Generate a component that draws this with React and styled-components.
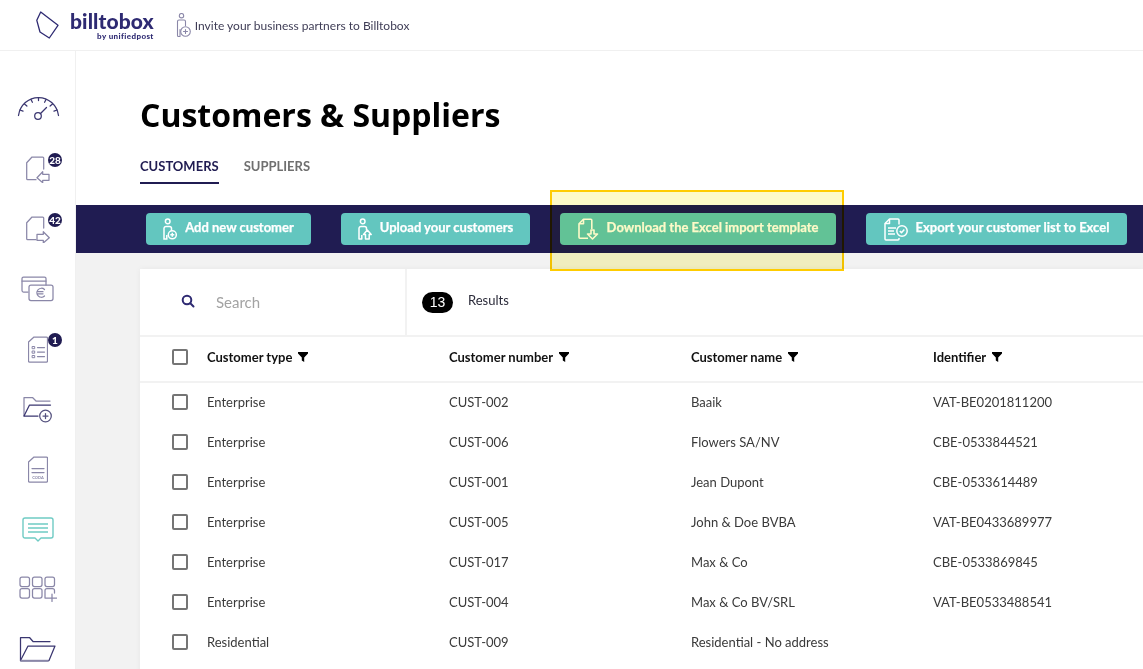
import React from "react";
import styled, { createGlobalStyle } from "styled-components";

const Global = createGlobalStyle`
  html, body { margin: 0; padding: 0; background: #fff; }
  body { font-family: "Lato", "Liberation Sans", sans-serif; color: #2b2b3a; overflow: hidden; }
  * { box-sizing: border-box; }
`;

const Page = styled.div`
  position: relative;
  width: 1143px;
  height: 669px;
  overflow: hidden;
`;

const Header = styled.header`
  height: 51px;
  display: flex;
  align-items: center;
  padding-left: 36px;
  border-bottom: 1px solid #f0f0f0;
`;

const Brand = styled.div`
  display: flex;
  align-items: center;
  gap: 11px;
`;

const BrandText = styled.div`
  display: flex;
  flex-direction: column;
  align-items: flex-end;
  color: #2e2a72;
  font-weight: 900;
  line-height: 1;
`;

const BrandName = styled.span`
  font-size: 21px;
  letter-spacing: 0.1px;
`;

const BrandSub = styled.span`
  font-size: 8px;
  font-weight: 900;
  letter-spacing: 0.4px;
  margin-top: 1px;
`;

const Invite = styled.div`
  display: flex;
  align-items: center;
  gap: 4px;
  margin-left: 22px;
  font-size: 12px;
  color: #3f3d56;
`;

const Body = styled.div`
  display: flex;
  height: 618px;
`;

const Sidebar = styled.nav`
  width: 76px;
  flex: none;
  padding-top: 28px;
  border-right: 1px solid #f0f0f0;
`;

const NavItem = styled.div`
  position: relative;
  height: 60px;
  display: flex;
  align-items: center;
  justify-content: center;
`;

const NavBadge = styled.span`
  position: absolute;
  left: 48px;
  top: ${(p) => p.$top}px;
  width: 14px;
  height: 14px;
  border-radius: 50%;
  background: #201c52;
  color: #fff;
  font-size: 10px;
  font-weight: 900;
  line-height: 14px;
  text-align: center;
`;

const Main = styled.main`
  flex: 1;
  min-width: 0;
  display: flex;
  flex-direction: column;
`;

const TitleArea = styled.div`
  height: 154px;
  padding: 44px 0 0 64px;
`;

const Title = styled.h1`
  margin: 0;
  font-family: "Open Sans", sans-serif;
  font-size: 32px;
  font-weight: 700;
  line-height: 40px;
  color: #000;
`;

const Tabs = styled.div`
  display: flex;
  gap: 25px;
  margin-top: 20px;
`;

const Tab = styled.div`
  font-size: 13px;
  font-weight: 700;
  height: 29px;
  padding-top: 3px;
  color: ${(p) => (p.$active ? "#201c52" : "#6f6f6f")};
  border-bottom: ${(p) => (p.$active ? "2px solid #201c52" : "none")};
`;

const Toolbar = styled.div`
  height: 48px;
  flex: none;
  background: #201c52;
  display: flex;
  align-items: center;
  padding-left: 70px;
  gap: 30px;
`;

const ToolButton = styled.button`
  height: 32px;
  width: ${(p) => p.$w}px;
  flex: none;
  border: 0;
  border-radius: 4px;
  background: #63c6bf;
  color: #fff;
  font-family: inherit;
  font-size: 13px;
  font-weight: 700;
  -webkit-text-stroke: 0.25px #fff;
  display: flex;
  align-items: center;
  justify-content: center;
  gap: 8px;
  padding: 0;
`;

const ButtonLabel = styled.span`
  margin-top: -5px;
`;

const Content = styled.div`
  flex: 1;
  min-height: 0;
  background: #f2f2f2;
  padding: 16px 0 0 64px;
`;

const Card = styled.section`
  background: #fff;
  height: 420px;
  box-shadow: 0 0 6px rgba(0, 0, 0, 0.05);
`;

const SearchRow = styled.div`
  height: 68px;
  display: flex;
  border-bottom: 2px solid #f2f2f2;
`;

const SearchBox = styled.div`
  width: 267px;
  display: flex;
  align-items: center;
  padding-left: 41px;
  gap: 21px;
  border-right: 2px solid #f2f2f2;
  font-size: 15px;
  color: #a3a3a3;

  svg {
    margin-top: -2px;
  }
`;

const Results = styled.div`
  display: flex;
  align-items: center;
  padding-left: 15px;
  gap: 15px;
  font-size: 13px;
  color: #2b2b3a;
`;

const Count = styled.span`
  width: 31px;
  height: 21px;
  border-radius: 11px;
  background: #000;
  color: #fff;
  font-family: "Liberation Sans", sans-serif;
  font-size: 14px;
  line-height: 21px;
  text-align: center;
`;

const ResultsLabel = styled.span`
  margin-top: -4px;
`;

const Row = styled.div`
  display: grid;
  grid-template-columns: 35px repeat(4, 242px);
  align-items: center;
  height: ${(p) => (p.$head ? 46 : 40)}px;
  padding: ${(p) => (p.$head ? "0 0 4px 32px" : "0 0 2px 32px")};
  font-size: 13px;
  color: #3a3a3a;
  border-bottom: ${(p) => (p.$head ? "2px solid #f2f2f2" : "none")};
`;

const Check = styled.span`
  width: 16px;
  height: 16px;
  border: 2px solid #757575;
  border-radius: 2px;
  background: #fff;
`;

const HeadCell = styled.div`
  display: flex;
  align-items: center;
  gap: 6px;
  font-weight: 700;
  color: #111;
`;

const Highlight = styled.div`
  position: absolute;
  left: 550px;
  top: 190px;
  width: 294px;
  height: 81px;
  border: 2px solid #ffcc00;
  background: #fdfac8;
  mix-blend-mode: multiply;
`;

const line = { fill: "none", stroke: "#8a87a8", strokeWidth: 1.25, strokeLinejoin: "round", strokeLinecap: "round" };
const dark = { ...line, stroke: "#3a3670" };

const Gauge = () => (
  <svg width="44" height="26" viewBox="1 0 44 26">
    <path d="M3.500 19.500C5 9 13.500 1.500 23.500 1.500S42 9 43.500 19.500" {...dark} />
    <path d="M5 14l3 1.200M9.500 8l2.400 2M16 3.500l1.400 2.800M23.500 1.600v3M31 3.500l-1.400 2.800M37.500 8l-2.400 2M42 14l-3 1.200" {...dark} />
    <circle cx="23" cy="20" r="3.300" {...dark} />
    <path d="M25.300 17.700L31.500 11.500" {...dark} />
  </svg>
);

const DocIn = () => (
  <svg width="24" height="27" viewBox="0 0 24 27">
    <path d="M17.700 13V2a1 1 0 0 0-1-1H6L.7 6.700V22.700a1 1 0 0 0 1 1H10" {...line} />
    <path d="M11 21.700l5.700-6v2.600H23v6h-6.300v2.400z" {...line} />
  </svg>
);

const DocOut = () => (
  <svg width="24" height="27" viewBox="0 0 24 27">
    <path d="M17.700 12V2a1 1 0 0 0-1-1H6L.7 6.700V22.700a1 1 0 0 0 1 1H10" {...line} />
    <path d="M11 18.300h6.300v-2.600l6 6-6 5.300v-2.700H11z" {...line} />
  </svg>
);

const Cards = () => (
  <svg width="33" height="26" viewBox="1 0 33 26">
    <path d="M8 16H3.500A1.500 1.500 0 0 1 2 14.500v-12A1.500 1.500 0 0 1 3.500 1h21A1.500 1.500 0 0 1 26 2.500V9" {...line} />
    <path d="M2 5h24" {...line} />
    <rect x="9" y="9" width="24" height="15.500" rx="2" {...line} />
    <path d="M24.500 13.500a4.500 4.500 0 1 0 0 6.500M17 15.700h6M17 17.800h6" {...line} />
  </svg>
);

const DocList = () => (
  <svg width="20" height="27" viewBox="0 0 20 27">
    <path d="M6 1h12.500a1 1 0 0 1 1 1v23a1 1 0 0 1-1 1h-17a1 1 0 0 1-1-1V6z" {...line} />
    <rect x="4.500" y="10.500" width="2.200" height="2.200" {...line} strokeWidth="1" />
    <rect x="4.500" y="15" width="2.200" height="2.200" {...line} strokeWidth="1" />
    <rect x="4.500" y="19.500" width="2.200" height="2.200" {...line} strokeWidth="1" />
    <path d="M9.500 11.500h7M9.500 16h7M9.500 20.500h7" {...line} />
  </svg>
);

const FolderPlus = () => (
  <svg width="30" height="27" viewBox="0 0 30 27">
    <path d="M1 20V1.500h8.500l3.500 3.500h14" {...line} />
    <path d="M1 20L6.500 9h21M1 20h14" {...dark} />
    <circle cx="22.500" cy="20" r="5.800" {...line} stroke="#55527f" />
    <path d="M22.500 17.500v5M20 20h5" {...line} stroke="#55527f" />
  </svg>
);

const DocCoda = () => (
  <svg width="20" height="27" viewBox="0 0 20 27">
    <path d="M6 1h12.500a1 1 0 0 1 1 1v23a1 1 0 0 1-1 1h-17a1 1 0 0 1-1-1V6z" {...line} />
    <path d="M4 12.500h12M4 16.500h12" {...line} />
    <text x="10" y="22.500" fontFamily="Lato, sans-serif" fontSize="4" fontWeight="700" fill="#8a87a8" textAnchor="middle">CODA</text>
  </svg>
);

const Chat = () => (
  <svg width="32" height="26" viewBox="0 0 32 26">
    <path d="M3 2h26a2 2 0 0 1 2 2v16a2 2 0 0 1-2 2H19l-3 3-3-3H3a2 2 0 0 1-2-2V4a2 2 0 0 1 2-2z" fill="none" stroke="#6fcbc4" strokeWidth="1.400" strokeLinejoin="round" />
    <path d="M6 8h20M6 12h20M6 16h20" fill="none" stroke="#6fcbc4" strokeWidth="1.400" />
  </svg>
);

const Grid = () => (
  <svg width="38" height="26" viewBox="0 0 38 26">
    {[1, 13.500, 26].map((x) => <rect key={x} x={x} y="1" width="9.500" height="9.500" rx="2" {...line} />)}
    {[1, 13.500].map((x) => <rect key={x} x={x} y="12.500" width="9.500" height="9.500" rx="2" {...line} />)}
    <path d="M26 22V14.500a2 2 0 0 1 2-2h5.500a2 2 0 0 1 2 2V17M26 22h11.500M33 18v7.500" {...line} />
  </svg>
);

const FolderOpen = () => (
  <svg width="37" height="26" viewBox="0 0 37 26">
    <path d="M1.500 24.500V1.500h9l3.500 4h17" {...dark} />
    <path d="M1.500 24.500L9 10h27l-6 14.500z" {...dark} />
    <path d="M1.500 24.800h28" stroke="#8a87a8" strokeWidth="2" />
  </svg>
);

const Logo = () => (
  <svg width="23" height="28" viewBox="0 0 23 28">
    <path d="M4.700 1L22 14.300 13.300 27 4 21 .8 9.300z" fill="none" stroke="#2e2a72" strokeWidth="1.300" strokeLinejoin="round" />
  </svg>
);

const PersonPlus = () => (
  <svg width="15" height="25" viewBox="0 0 15 25" fill="none" stroke="#8a87a8" strokeWidth="1.100" strokeLinecap="round">
    <circle cx="5.500" cy="2.700" r="2.200" />
    <path d="M1.500 14.500V8.500A1.500 1.500 0 0 1 3 7h5a1.500 1.500 0 0 1 1.500 1.500v4" />
    <path d="M1.500 14.500V22.500a1 1 0 0 0 1 1H4M4 23.500v-7" />
    <circle cx="9.500" cy="18.500" r="4.800" />
    <path d="M9.500 16.500v4M7.500 18.500h4" />
  </svg>
);

const PersonAdd = () => (
  <svg width="14" height="22" viewBox="0 0 14 22" fill="none" stroke="#fff" strokeWidth="1.500">
    <circle cx="4.700" cy="3.400" r="2.300" />
    <path d="M1 16V10.500a2 2 0 0 1 2-2h3.500a2 2 0 0 1 2 2v2.500M1 16v5h2.800v-4" />
    <circle cx="9.300" cy="16.800" r="4" />
    <path d="M9.300 14.800v4M7.300 16.800h4" />
  </svg>
);

const PersonUp = () => (
  <svg width="14" height="22" viewBox="0 0 14 22" fill="none" stroke="#fff" strokeWidth="1.500" strokeLinejoin="round">
    <circle cx="4.700" cy="3.400" r="2.300" />
    <path d="M1 16V10.500a2 2 0 0 1 2-2h3.500a2 2 0 0 1 2 2V12M1 16v5h2.800v-4" />
    <path d="M5.500 16.500l3.800-4.500 3.900 4.500h-2V21H7.500v-4.500z" />
  </svg>
);

const DocDown = () => (
  <svg width="21" height="22" viewBox="0 0 21 22" fill="none" stroke="#fff" strokeWidth="1.600" strokeLinejoin="round">
    <path d="M13.800 11V2.200a1 1 0 0 0-1-1H5.500L1 5.700v13.600a1 1 0 0 0 1 1h8" />
    <path d="M5.500 1.200v4.500H1" />
    <path d="M13 12v4h-3.500l5 5 5-5H16v-4z" />
  </svg>
);

const DocCheck = () => (
  <svg width="24" height="23" viewBox="0 0 24 23" fill="none" stroke="#fff" strokeWidth="1.500" strokeLinejoin="round">
    <path d="M15 6.500V2a1 1 0 0 0-1-1H5.500L1 5.500V21a1 1 0 0 0 1 1h12a1 1 0 0 0 1-1v-1" />
    <path d="M5.500 1v4.500H1M4 10h8M4 13h6M4 16h7" />
    <circle cx="18" cy="13" r="5.200" />
    <path d="M15.800 13l1.700 1.700 2.800-3.200" />
  </svg>
);

const SearchIcon = () => (
  <svg width="14" height="14" viewBox="0 0 14 14" fill="none" stroke="#2e2a72" strokeWidth="2" strokeLinecap="round">
    <circle cx="6" cy="6" r="4.300" />
    <path d="M9.300 9.300L12.500 12.500" />
  </svg>
);

const Filter = () => (
  <svg width="10" height="10" viewBox="0 0 10 10" fill="#000">
    <path d="M0 0h10v1.500L6.200 5.500V10L3.800 8.500v-3L0 1.500z" />
  </svg>
);

const navItems = [
  { icon: <Gauge /> },
  { icon: <DocIn />, badge: "28", top: 14 },
  { icon: <DocOut />, badge: "42", top: 14 },
  { icon: <Cards /> },
  { icon: <DocList />, badge: "1", top: 14 },
  { icon: <FolderPlus /> },
  { icon: <DocCoda /> },
  { icon: <Chat /> },
  { icon: <Grid /> },
  { icon: <FolderOpen /> },
];

const rows = [
  ["Enterprise", "CUST-002", "Baaik", "VAT-BE0201811200"],
  ["Enterprise", "CUST-006", "Flowers SA/NV", "CBE-0533844521"],
  ["Enterprise", "CUST-001", "Jean Dupont", "CBE-0533614489"],
  ["Enterprise", "CUST-005", "John & Doe BVBA", "VAT-BE0433689977"],
  ["Enterprise", "CUST-017", "Max & Co", "CBE-0533869845"],
  ["Enterprise", "CUST-004", "Max & Co BV/SRL", "VAT-BE0533488541"],
  ["Residential", "CUST-009", "Residential - No address", ""],
];

const heads = ["Customer type", "Customer number", "Customer name", "Identifier"];

export default function App() {
  return (
    <Page>
      <Global />
      <Header>
        <Brand>
          <Logo />
          <BrandText>
            <BrandName>billtobox</BrandName>
            <BrandSub>by unifiedpost</BrandSub>
          </BrandText>
        </Brand>
        <Invite>
          <PersonPlus />
          Invite your business partners to Billtobox
        </Invite>
      </Header>
      <Body>
        <Sidebar>
          {navItems.map((item, i) => (
            <NavItem key={i}>
              {item.icon}
              {item.badge && <NavBadge $top={item.top}>{item.badge}</NavBadge>}
            </NavItem>
          ))}
        </Sidebar>
        <Main>
          <TitleArea>
            <Title>Customers &amp; Suppliers</Title>
            <Tabs>
              <Tab $active>CUSTOMERS</Tab>
              <Tab>SUPPLIERS</Tab>
            </Tabs>
          </TitleArea>
          <Toolbar>
            <ToolButton $w={165}><PersonAdd /><ButtonLabel>Add new customer</ButtonLabel></ToolButton>
            <ToolButton $w={189}><PersonUp /><ButtonLabel>Upload your customers</ButtonLabel></ToolButton>
            <ToolButton $w={276}><DocDown /><ButtonLabel>Download the Excel import template</ButtonLabel></ToolButton>
            <ToolButton $w={261}><DocCheck /><ButtonLabel>Export your customer list to Excel</ButtonLabel></ToolButton>
          </Toolbar>
          <Content>
            <Card>
              <SearchRow>
                <SearchBox><SearchIcon />Search</SearchBox>
                <Results>
                  <Count>13</Count>
                  <ResultsLabel>Results</ResultsLabel>
                </Results>
              </SearchRow>
              <Row $head>
                <Check />
                {heads.map((h) => <HeadCell key={h}>{h}<Filter /></HeadCell>)}
              </Row>
              {rows.map((r) => (
                <Row key={r[1]}>
                  <Check />
                  {r.map((c, i) => <div key={i}>{c}</div>)}
                </Row>
              ))}
            </Card>
          </Content>
        </Main>
      </Body>
      <Highlight />
    </Page>
  );
}
